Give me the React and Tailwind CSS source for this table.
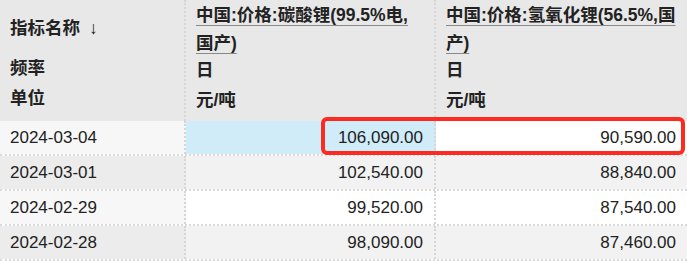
const rows = [
  { date: '2024-03-04', a: '106,090.00', b: '90,590.00' },
  { date: '2024-03-01', a: '102,540.00', b: '88,840.00' },
  { date: '2024-02-29', a: '99,520.00', b: '87,540.00' },
  { date: '2024-02-28', a: '98,090.00', b: '87,460.00' },
];

const cjk = { fontFamily: '"Liberation Sans", "Noto Sans CJK SC", sans-serif' };

export default function App() {
  return (
    <div className="relative w-[687px] h-[261px] overflow-hidden bg-white text-[#222]" style={cjk}>
      {/* Header */}
      <div className="flex h-[121px] bg-[#e8e8e8] text-[17.5px] font-bold">
        <div className="w-[186px] shrink-0 border-r-2 border-dotted border-[#d6d6d6] pl-[10px]">
          <div className="h-[57px] flex items-center">
            指标名称 <span className="ml-[9px] font-normal">↓</span>
          </div>
          <div className="h-[26px] leading-[22px]">频率</div>
          <div className="h-[30px] leading-[30px]">单位</div>
        </div>
        <div className="w-[250px] shrink-0 border-r-2 border-dotted border-[#d6d6d6] pl-[10px] pr-[11px]">
          <div className="h-[57px] pt-[1px] leading-[28px]">
            <span className="underline decoration-[#888] underline-offset-[4px]">中国:价格:碳酸锂(99.5%电,国产)</span>
          </div>
          <div className="h-[26px] leading-[26px]">日</div>
          <div className="h-[30px] leading-[34px]">元/吨</div>
        </div>
        <div className="flex-1 pl-[10px] pr-[11px]">
          <div className="h-[57px] pt-[1px] leading-[28px]">
            <span className="underline decoration-[#888] underline-offset-[4px]">中国:价格:氢氧化锂(56.5%,国产)</span>
          </div>
          <div className="h-[26px] leading-[26px]">日</div>
          <div className="h-[30px] leading-[34px]">元/吨</div>
        </div>
      </div>

      {/* Body */}
      {rows.map((r, i) => {
        const odd = i % 2 === 1;
        return (
          <div key={r.date} className="flex h-[35px] border-b-2 border-dotted border-[#d9d9d9] text-[17px]">
            <div className={`w-[186px] shrink-0 border-r-2 border-dotted border-[#d6d6d6] pl-[10px] flex items-center ${odd ? 'bg-[#ececec]' : 'bg-[#f7f7f7]'}`}>
              {r.date}
            </div>
            <div className={`w-[250px] shrink-0 border-r-2 border-dotted border-[#d6d6d6] pr-[11px] flex items-center justify-end ${i === 0 ? 'bg-[#d0ecf8]' : odd ? 'bg-[#f2f2f2]' : 'bg-white'}`}>
              {r.a}
            </div>
            <div className={`flex-1 pr-[11px] flex items-center justify-end ${odd ? 'bg-[#f2f2f2]' : 'bg-white'}`}>
              {r.b}
            </div>
          </div>
        );
      })}

      {/* highlight annotation */}
      <div className="absolute left-[321px] top-[117px] w-[364px] h-[38px] border-4 border-[#ff2a1f] rounded-[6px]" />
    </div>
  );
}
